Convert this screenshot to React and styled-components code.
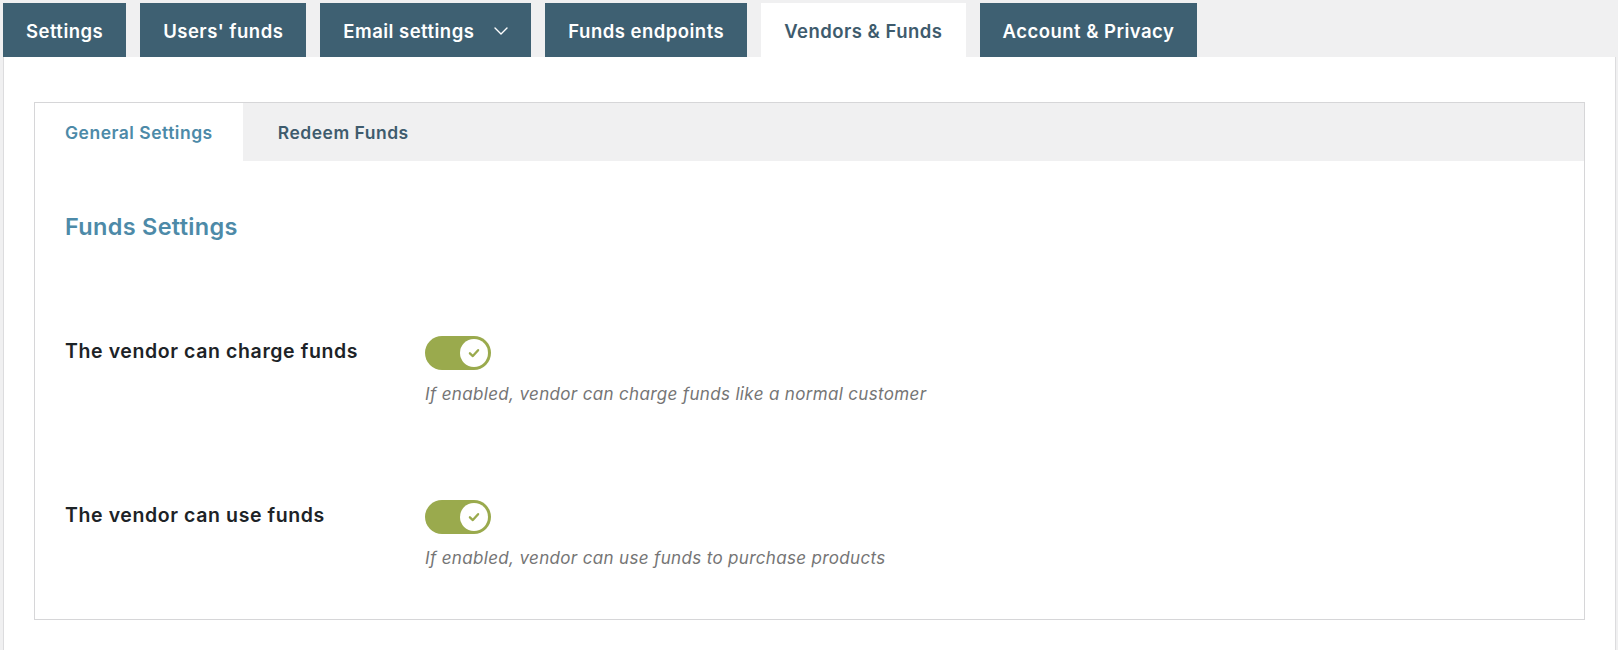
import React from "react";
import styled, { createGlobalStyle } from "styled-components";

const GlobalStyle = createGlobalStyle`
  body {
    margin: 0;
    background: #f0f0f1;
    font-family: Inter, "Noto Sans", sans-serif;
    -webkit-font-smoothing: antialiased;
  }
`;

const Page = styled.div`
  padding: 3px 2px 0 3px;
  min-height: 647px;
  display: flex;
  flex-direction: column;
`;

const TabBar = styled.nav`
  display: flex;
  gap: 14px;
`;

const Tab = styled.div`
  display: flex;
  align-items: center;
  gap: 20px;
  height: 54px;
  padding: 1px 23px 0;
  box-sizing: border-box;
  font-size: 18.5px;
  letter-spacing: 0.48px;
  font-weight: 600;
  color: ${(p) => (p.$active ? "#3e5b6d" : "#ffffff")};
  background: ${(p) => (p.$active ? "#ffffff" : "#3e6072")};
  cursor: pointer;
`;

const Panel = styled.div`
  flex: 1;
  background: #fff;
  border: 1px solid #dcdcde;
  border-top: none;
  padding: 45px 30px 30px 30px;
`;

const Box = styled.div`
  border: 1px solid #d6d6d8;
  background: #fff;
`;

const SubTabs = styled.div`
  display: flex;
  height: 58px;
  background: #f0f0f1;
`;

const SubTab = styled.div`
  display: flex;
  align-items: center;
  padding: 0 ${(p) => (p.$active ? "30px" : "35px")};
  font-size: 17.5px;
  letter-spacing: 0.5px;
  font-weight: 600;
  color: ${(p) => (p.$active ? "#4d8aa8" : "#3e5b6d")};
  background: ${(p) => (p.$active ? "#fff" : "transparent")};
`;

const Content = styled.div`
  padding: 52px 30px 51px;
`;

const Heading = styled.h2`
  margin: 0 0 95px;
  font-size: 23.5px;
  letter-spacing: 0.3px;
  line-height: 28px;
  font-weight: 600;
  color: #4d8aa8;
`;

const Rows = styled.div`
  display: flex;
  flex-direction: column;
  gap: 96px;
`;

const Row = styled.div`
  display: flex;
`;

const Label = styled.div`
  width: 360px;
  padding-top: 3px;
  font-size: 19.5px;
  letter-spacing: 0.6px;
  line-height: 24px;
  font-weight: 600;
  color: #1d2327;
`;

const Field = styled.div`
  display: flex;
  flex-direction: column;
  align-items: flex-start;
`;

const Track = styled.div`
  width: 66px;
  height: 34px;
  border-radius: 17px;
  background: ${(p) => (p.$on ? "#9aaa4d" : "#ccc")};
  display: flex;
  align-items: center;
  justify-content: ${(p) => (p.$on ? "flex-end" : "flex-start")};
  padding: 0 3px;
  box-sizing: border-box;
`;

const Knob = styled.div`
  width: 28px;
  height: 28px;
  border-radius: 50%;
  background: #fff;
  display: flex;
  align-items: center;
  justify-content: center;
`;

const Description = styled.p`
  margin: 14px 0 0;
  font-size: 17px;
  letter-spacing: 0.34px;
  line-height: 20px;
  font-style: italic;
  color: #757575;
`;

function Chevron() {
  return (
    <svg width="14" height="8" viewBox="0 0 14 8">
      <path d="M1 1 L7 7 L13 1" fill="none" stroke="currentColor" strokeWidth="1.4" strokeLinecap="round" strokeLinejoin="round" />
    </svg>
  );
}

function Toggle({ on }) {
  return (
    <Track $on={on}>
      <Knob>
        <svg width="14" height="14" viewBox="0 0 12 12">
          <path d="M2.5 6.3 L5 8.6 L9.5 3.6" fill="none" stroke="#9aaa4d" strokeWidth="2" strokeLinecap="round" strokeLinejoin="round" />
        </svg>
      </Knob>
    </Track>
  );
}

const tabs = ["Settings", "Users' funds", "Email settings", "Funds endpoints", "Vendors & Funds", "Account & Privacy"];

const rows = [
  { label: "The vendor can charge funds", desc: "If enabled, vendor can charge funds like a normal customer" },
  { label: "The vendor can use funds", desc: "If enabled, vendor can use funds to purchase products" },
];

export default function App() {
  return (
    <Page>
      <GlobalStyle />
      <TabBar>
        {tabs.map((t) => (
          <Tab key={t} $active={t === "Vendors & Funds"}>
            {t}
            {t === "Email settings" && <Chevron />}
          </Tab>
        ))}
      </TabBar>
      <Panel>
        <Box>
          <SubTabs>
            <SubTab $active>General Settings</SubTab>
            <SubTab>Redeem Funds</SubTab>
          </SubTabs>
          <Content>
            <Heading>Funds Settings</Heading>
            <Rows>
              {rows.map((r) => (
                <Row key={r.label}>
                  <Label>{r.label}</Label>
                  <Field>
                    <Toggle on />
                    <Description>{r.desc}</Description>
                  </Field>
                </Row>
              ))}
            </Rows>
          </Content>
        </Box>
      </Panel>
    </Page>
  );
}
